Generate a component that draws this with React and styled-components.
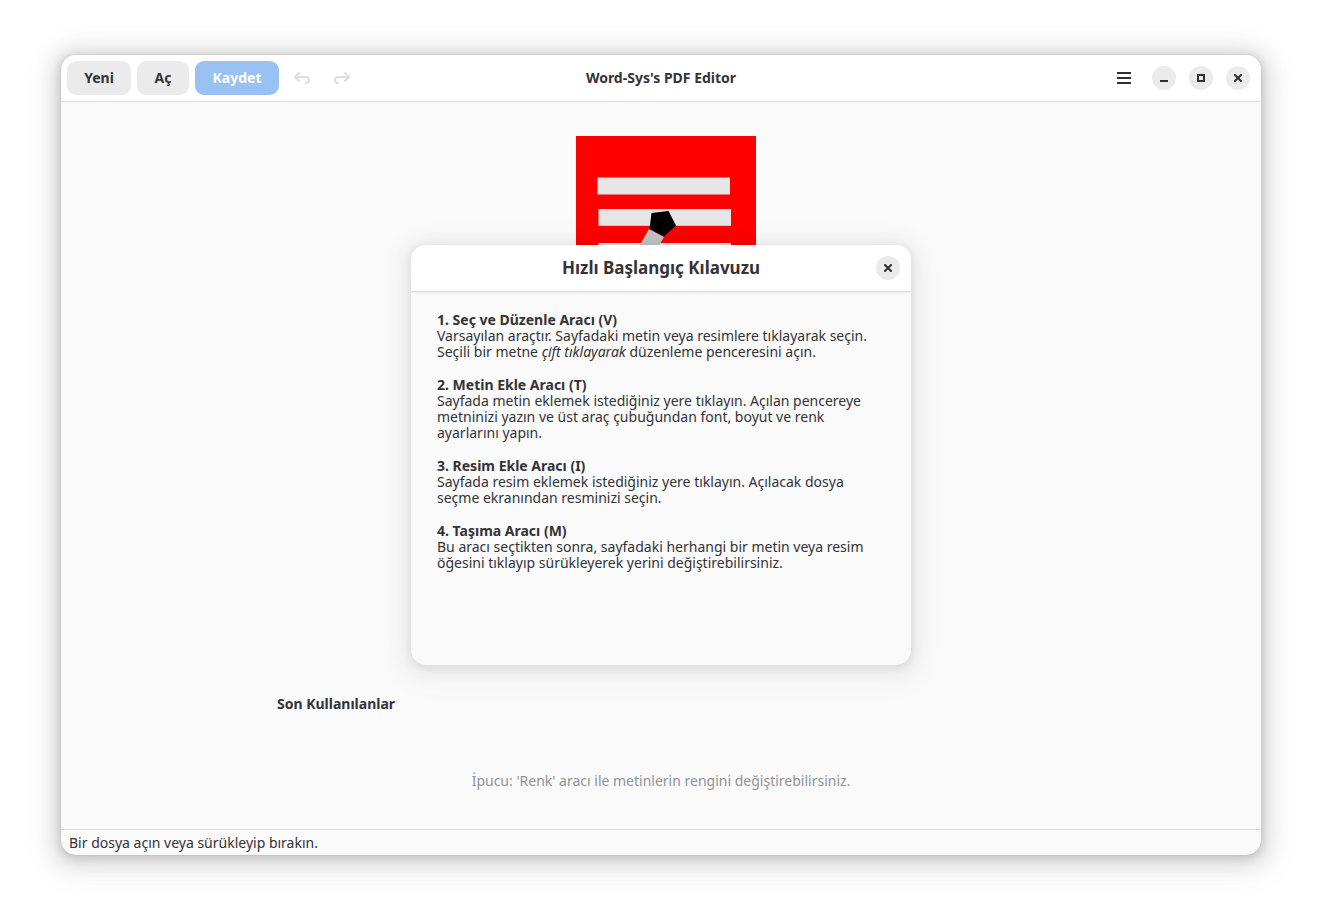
import React from 'react';
import styled, { createGlobalStyle } from 'styled-components';

const GlobalStyle = createGlobalStyle`
    * { box-sizing: border-box; }
    body {
        margin: 0;
        background: #ffffff;
        color: #333338;
        font-family: "Noto Sans", "Open Sans", sans-serif;
        font-size: 14px;
        line-height: 16px;
    }
    button { font: inherit; color: inherit; }
`;

const Desktop = styled.div`
    display: flex;
    min-height: 100vh;
    padding: 55px 61px 67px;
`;

const Window = styled.div`
    position: relative;
    flex: 1;
    display: flex;
    flex-direction: column;
    background: #fafafa;
    border-radius: 15px;
    overflow: hidden;
    box-shadow:
        0 2px 8px 2px rgba(0, 0, 0, 0.13),
        0 3px 20px 10px rgba(0, 0, 0, 0.09),
        0 6px 32px 16px rgba(0, 0, 0, 0.04),
        0 0 0 1px rgba(0, 0, 0, 0.03);
`;

const HeaderBar = styled.header`
    display: grid;
    grid-template-columns: 1fr auto 1fr;
    align-items: center;
    padding: 6px;
    background: #ffffff;
    border-bottom: 1px solid #dedede;
`;

const Tools = styled.div`
    display: flex;
    gap: 6px;
`;

const HeaderEnd = styled.div`
    display: flex;
    justify-content: flex-end;
    align-items: center;
    gap: 11px;
    padding-right: 5px;
`;

const WindowControls = styled.div`
    display: flex;
    gap: 13px;
`;

const WindowTitle = styled.h1`
    margin: 0;
    font-size: 14px;
    font-weight: 700;
`;

const TextButton = styled.button`
    min-width: ${(props) => props.$width}px;
    height: 34px;
    padding: 0 16px;
    border: 0;
    border-radius: 9px;
    background: ${(props) => (props.$suggested ? '#9ac1f3' : '#ebebeb')};
    color: ${(props) => (props.$suggested ? '#ffffff' : '#333338')};
    font-weight: 700;
`;

const IconButton = styled.button`
    display: flex;
    align-items: center;
    justify-content: center;
    width: 34px;
    height: 34px;
    padding: 0;
    border: 0;
    background: none;
    color: ${(props) => (props.disabled ? '#dedede' : '#2e2e33')};
`;

const RoundButton = styled.button`
    display: flex;
    align-items: center;
    justify-content: center;
    width: 24px;
    height: 24px;
    padding: 0;
    border: 0;
    border-radius: 50%;
    background: #ebebeb;
    color: #2e2e33;
`;

const Welcome = styled.main`
    flex: 1;
    display: flex;
    flex-direction: column;
    justify-content: space-between;
    width: 100%;
    max-width: 768px;
    margin: 0 auto;
    padding: 34px 0 40px;
`;

const Logo = styled.svg`
    align-self: center;
    width: 190px;
    height: 240px;
`;

const Recent = styled.section`
    display: flex;
    flex-direction: column;
    gap: 61px;
`;

const RecentTitle = styled.h2`
    margin: 0;
    font-size: 14px;
    font-weight: 700;
`;

const Tip = styled.p`
    margin: 0;
    text-align: center;
    color: #929294;
`;

const StatusBar = styled.footer`
    padding: 5px 8px 4px;
    border-top: 1px solid #d9d9d9;
`;

const Overlay = styled.div`
    position: absolute;
    inset: 0;
    display: flex;
    align-items: center;
    justify-content: center;
`;

const Dialog = styled.div`
    display: flex;
    flex-direction: column;
    width: 500px;
    min-height: 420px;
    background: #fafafa;
    border-radius: 15px;
    overflow: hidden;
    box-shadow:
        0 2px 8px 2px rgba(0, 0, 0, 0.07),
        0 3px 20px 10px rgba(0, 0, 0, 0.04),
        0 6px 32px 16px rgba(0, 0, 0, 0.02);
`;

const DialogHeader = styled.div`
    display: grid;
    grid-template-columns: 1fr auto 1fr;
    align-items: center;
    height: 47px;
    padding: 0 11px;
    background: #ffffff;
    border-bottom: 1px solid #dcdcdc;
    box-shadow: 0 1px 2px rgba(0, 0, 0, 0.06);
`;

const DialogTitle = styled.h2`
    grid-column: 2;
    margin: 0;
    font-size: 17px;
    line-height: 24px;
    font-weight: 700;
`;

const DialogClose = styled(RoundButton)`
    justify-self: end;
`;

const Guide = styled.div`
    display: flex;
    flex-direction: column;
    gap: 17px;
    padding: 20px 26px;
`;

const GuideTitle = styled.h3`
    margin: 0;
    font-size: 14px;
    font-weight: 700;
`;

const GuideText = styled.p`
    margin: 0;
`;

const CloseIcon = () => (
    <svg width="8" height="8" viewBox="0 0 8 8" aria-hidden="true">
        <path d="M1 1l6 6M7 1l-6 6" stroke="currentColor" strokeWidth="2" strokeLinecap="square" />
    </svg>
);

const UndoIcon = ({ flip }) => (
    <svg width="16" height="16" viewBox="0 0 16 16" fill="none" aria-hidden="true">
        <g
            transform={flip ? 'matrix(-1 0 0 1 16 0)' : undefined}
            stroke="currentColor"
            strokeWidth="2"
            strokeLinecap="round"
            strokeLinejoin="round"
        >
            <path d="M5 3L1 7l4 4" />
            <path d="M1 7h11a3 3 0 0 1 0 6" />
        </g>
    </svg>
);

const AppLogo = () => (
    <Logo viewBox="0 0 190 240" role="img" aria-label="PDF Editor">
        <rect x="10" width="180" height="240" fill="#ff0000" />
        <rect x="31.5" y="41.5" width="132.500" height="17" fill="#e6e6e6" />
        <rect x="32.5" y="73" width="132.500" height="16.800" fill="#e6e6e6" />
        <rect x="32.5" y="107" width="132.500" height="16.800" fill="#e6e6e6" />
        <path d="M83 93l15 8-40 70-15-8z" fill="#c4c4c4" />
        <path d="M85.500 77l17-2 7.500 14.500-12 11-14.500-7.500z" fill="#000000" />
    </Logo>
);

const guide = [
    {
        title: '1. Seç ve Düzenle Aracı (V)',
        text: (
            <>
                Varsayılan araçtır. Sayfadaki metin veya resimlere tıklayarak seçin.
                <br />
                Seçili bir metne <em>çift tıklayarak</em> düzenleme penceresini açın.
            </>
        ),
    },
    {
        title: '2. Metin Ekle Aracı (T)',
        text: 'Sayfada metin eklemek istediğiniz yere tıklayın. Açılan pencereye metninizi yazın ve üst araç çubuğundan font, boyut ve renk ayarlarını yapın.',
    },
    {
        title: '3. Resim Ekle Aracı (I)',
        text: 'Sayfada resim eklemek istediğiniz yere tıklayın. Açılacak dosya seçme ekranından resminizi seçin.',
    },
    {
        title: '4. Taşıma Aracı (M)',
        text: 'Bu aracı seçtikten sonra, sayfadaki herhangi bir metin veya resim öğesini tıklayıp sürükleyerek yerini değiştirebilirsiniz.',
    },
];

const App = () => {
    return (
        <Desktop>
            <GlobalStyle />
            <Window>
                <HeaderBar>
                    <Tools>
                        <TextButton $width={64}>Yeni</TextButton>
                        <TextButton $width={52}>Aç</TextButton>
                        <TextButton $width={84} $suggested disabled>Kaydet</TextButton>
                        <IconButton disabled aria-label="Geri al"><UndoIcon /></IconButton>
                        <IconButton disabled aria-label="Yinele"><UndoIcon flip /></IconButton>
                    </Tools>
                    <WindowTitle>Word-Sys's PDF Editor</WindowTitle>
                    <HeaderEnd>
                        <IconButton aria-label="Menü">
                            <svg width="14" height="12" viewBox="0 0 14 12" aria-hidden="true">
                                <path d="M0 1h14M0 6h14M0 11h14" stroke="currentColor" strokeWidth="2" />
                            </svg>
                        </IconButton>
                        <WindowControls>
                            <RoundButton aria-label="Küçült">
                                <svg width="8" height="8" viewBox="0 0 8 8" aria-hidden="true">
                                    <path d="M0 7h8" stroke="currentColor" strokeWidth="2" />
                                </svg>
                            </RoundButton>
                            <RoundButton aria-label="Büyüt">
                                <svg width="8" height="8" viewBox="0 0 8 8" fill="none" aria-hidden="true">
                                    <path d="M1 1h6v6H1z" stroke="currentColor" strokeWidth="2" />
                                </svg>
                            </RoundButton>
                            <RoundButton aria-label="Kapat"><CloseIcon /></RoundButton>
                        </WindowControls>
                    </HeaderEnd>
                </HeaderBar>
                <Welcome>
                    <AppLogo />
                    <Recent>
                        <RecentTitle>Son Kullanılanlar</RecentTitle>
                        <Tip>İpucu: 'Renk' aracı ile metinlerin rengini değiştirebilirsiniz.</Tip>
                    </Recent>
                </Welcome>
                <StatusBar>Bir dosya açın veya sürükleyip bırakın.</StatusBar>
                <Overlay>
                    <Dialog role="dialog" aria-labelledby="guide-title">
                        <DialogHeader>
                            <DialogTitle id="guide-title">Hızlı Başlangıç Kılavuzu</DialogTitle>
                            <DialogClose aria-label="Kapat"><CloseIcon /></DialogClose>
                        </DialogHeader>
                        <Guide>
                            {guide.map((item) => (
                                <section key={item.title}>
                                    <GuideTitle>{item.title}</GuideTitle>
                                    <GuideText>{item.text}</GuideText>
                                </section>
                            ))}
                        </Guide>
                    </Dialog>
                </Overlay>
            </Window>
        </Desktop>
    );
};

export default App;
